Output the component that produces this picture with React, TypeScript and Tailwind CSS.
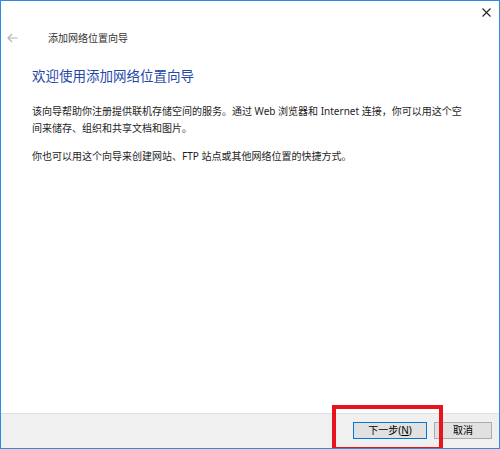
import React from 'react'

const FONT = { fontFamily: '"Noto Sans", "Noto Sans CJK SC", sans-serif' }

function CloseIcon() {
  return (
    <svg width="9" height="9" viewBox="0 0 9 9">
      <path d="M0.5 0.5 L8.5 8.5 M8.5 0.5 L0.5 8.5" stroke="#222" strokeWidth="1.1" />
    </svg>
  )
}

function BackArrow() {
  return (
    <svg width="11" height="10" viewBox="0 0 11 10">
      <path d="M10.5 5 H1 M5 1 L1 5 L5 9" stroke="#b4b4b4" strokeWidth="1.2" fill="none" />
    </svg>
  )
}

export default function App() {
  return (
    <div
      className="relative flex h-[449px] w-[500px] flex-col overflow-hidden border border-[#2f8be0] bg-white text-[#1e1e1e]"
      style={FONT}
    >
      {/* Caption bar */}
      <div className="flex h-[23px] items-center justify-end pr-[8px]">
        <CloseIcon />
      </div>

      {/* Navigation row */}
      <div className="flex h-[28px] items-center pl-[6px]">
        <BackArrow />
        <span className="ml-[30px] text-[10px] text-[#333]">添加网络位置向导</span>
      </div>

      {/* Page body */}
      <div className="flex-1 pl-[31px]">
        <h1 className="mt-[14px] text-[13.5px] leading-[20px] font-normal text-[#1f47a8]">
          欢迎使用添加网络位置向导
        </h1>
        <p className="mt-[17px] whitespace-nowrap text-[10px] leading-[17px]">
          该向导帮助你注册提供联机存储空间的服务。通过 Web 浏览器和 Internet 连接，你可以用这个空
          <br />
          间来储存、组织和共享文档和图片。
        </p>
        <p className="mt-[11px] whitespace-nowrap text-[10px] leading-[17px]">
          你也可以用这个向导来创建网站、FTP 站点或其他网络位置的快捷方式。
        </p>
      </div>

      {/* Button strip */}
      <div className="flex h-[35px] items-start justify-end gap-[7px] border-t border-[#dfdfdf] bg-[#f0f0f0] pt-[8px] pr-[7px]">
        <button className="flex h-[17px] w-[74px] items-center justify-center border border-[#0078d7] bg-[#e1e1e1] text-[10px] text-black">
          下一步(<span className="underline">N</span>)
        </button>
        <button className="flex h-[17px] w-[58px] items-center justify-center border border-[#adadad] bg-[#e1e1e1] text-[10px] text-black">
          取消
        </button>
      </div>

      {/* Highlight frame around the next button */}
      <div className="absolute top-[404px] left-[331px] h-[46px] w-[111px] border-[4px] border-[#e8141c]" />
    </div>
  )
}
